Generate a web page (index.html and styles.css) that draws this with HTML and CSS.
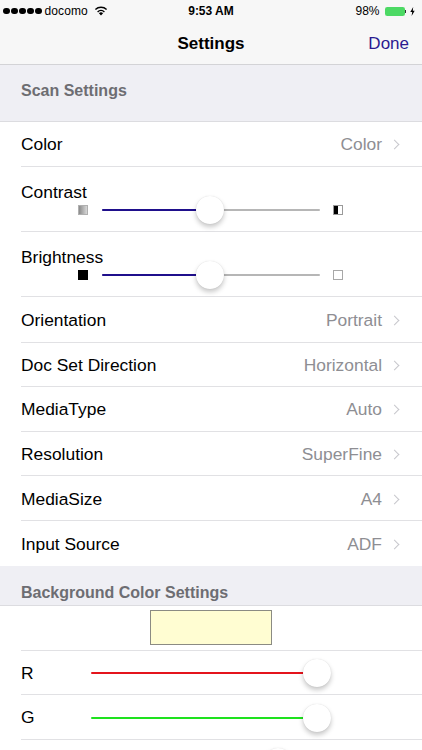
FILE: index.html
```html
<!DOCTYPE html>
<html>
<head>
<meta charset="utf-8">
<link rel="stylesheet" href="styles.css">
</head>
<body>
<div class="screen">
  <div class="status">
    <div class="st-left">
      <span class="dots"><i></i><i></i><i></i><i></i><i></i></span>
      <span class="carrier">docomo</span>
      <svg class="wifi" width="14" height="10" viewBox="0 0 14 10">
        <path d="M7 9.6 L4.9 7.3 A3 3 0 0 1 9.1 7.3 Z" fill="#000"/>
        <path d="M3.6 5.9 A4.9 4.9 0 0 1 10.4 5.9" stroke="#000" stroke-width="1.4" fill="none"/>
        <path d="M1.4 3.6 A8 8 0 0 1 12.6 3.6" stroke="#000" stroke-width="1.4" fill="none"/>
      </svg>
    </div>
    <div class="st-time">9:53 AM</div>
    <div class="st-right">
      <span class="pct">98%</span>
      <span class="battery"><span class="level"></span></span><span class="nub"></span>
      <svg class="bolt" width="5" height="9" viewBox="0 0 5 9"><path d="M3.2 0 L0.3 5 H2.2 L1.6 9 L4.7 3.8 H2.8 Z" fill="#000"/></svg>
    </div>
  </div>
  <div class="nav">
    <div class="nav-title">Settings</div>
    <div class="nav-done">Done</div>
  </div>

  <div class="header header-first">Scan Settings</div>
  <div class="group">
    <div class="row"><span class="label">Color</span><span class="value">Color</span><span class="chev"></span></div>
    <div class="row row-slider">
      <span class="label">Contrast</span>
      <div class="slider-line">
        <span class="ico ico-contrast-low"></span>
        <div class="track"><div class="fill fill-blue" style="width:49.5%"></div><span class="thumb" style="left:49.5%"></span></div>
        <span class="ico ico-contrast-high"></span>
      </div>
    </div>
    <div class="row row-slider">
      <span class="label">Brightness</span>
      <div class="slider-line">
        <span class="ico ico-dark"></span>
        <div class="track"><div class="fill fill-blue" style="width:49.5%"></div><span class="thumb" style="left:49.5%"></span></div>
        <span class="ico ico-light"></span>
      </div>
    </div>
    <div class="row row-tall"><span class="label">Orientation</span><span class="value">Portrait</span><span class="chev"></span></div>
    <div class="row"><span class="label">Doc Set Direction</span><span class="value">Horizontal</span><span class="chev"></span></div>
    <div class="row"><span class="label">MediaType</span><span class="value">Auto</span><span class="chev"></span></div>
    <div class="row"><span class="label">Resolution</span><span class="value">SuperFine</span><span class="chev"></span></div>
    <div class="row"><span class="label">MediaSize</span><span class="value">A4</span><span class="chev"></span></div>
    <div class="row row-last"><span class="label">Input Source</span><span class="value">ADF</span><span class="chev"></span></div>
  </div>

  <div class="header header-second">Background Color Settings</div>
  <div class="group">
    <div class="row row-swatch"><span class="swatch"></span></div>
    <div class="row row-rgb">
      <span class="label rgb-label">R</span>
      <div class="rgb-track"><div class="range"><div class="rgb-fill fill-red" style="width:calc(14px + 100%)"></div><span class="thumb" style="left:100%"></span></div></div>
    </div>
    <div class="row row-rgb row-g">
      <span class="label rgb-label">G</span>
      <div class="rgb-track"><div class="range"><div class="rgb-fill fill-green" style="width:calc(14px + 100%)"></div><span class="thumb" style="left:100%"></span></div></div>
    </div>
    <div class="row row-rgb">
      <span class="label rgb-label">B</span>
      <div class="rgb-track"><div class="range"><div class="rgb-fill fill-bluec" style="width:calc(14px + 81.6%)"></div><span class="thumb" style="left:81.6%"></span></div></div>
    </div>
  </div>
</div>
</body>
</html>
```

FILE: styles.css
```css
* { box-sizing: border-box; }
html, body { margin: 0; padding: 0; }
body {
  width: 422px;
  height: 750px;
  overflow: hidden;
  background: #efeff4;
  font-family: "Liberation Sans", Arial, sans-serif;
  color: #000;
}
.screen { width: 422px; height: 750px; overflow: hidden; }

.status {
  height: 20px;
  background: #f7f7f7;
  display: flex;
  align-items: center;
  justify-content: space-between;
  padding: 2px 7px 0 3px;
  font-size: 12px;
  position: relative;
}
.st-left { display: flex; align-items: center; }
.dots { display: flex; gap: 1.5px; margin-right: 3px; }
.dots i { width: 6.5px; height: 6.5px; border-radius: 50%; background: #000; display: block; }
.carrier { margin-right: 6px; letter-spacing: 0.1px; }
.wifi { display: block; }
.st-time {
  position: absolute;
  left: 0; right: 0;
  top: 2px; bottom: 0;
  display: flex;
  align-items: center;
  justify-content: center;
  font-weight: bold;
  pointer-events: none;
}
.st-right { display: flex; align-items: center; }
.pct { margin-right: 5px; }
.battery {
  width: 20px; height: 9px;
  border: 1px solid #4cd964;
  border-radius: 1.5px;
  display: block;
}
.level { display: block; width: 100%; height: 100%; background: #4cd964; }
.nub { width: 1.5px; height: 3px; background: #333; display: block; margin-right: 4px; }
.bolt { display: block; }

.nav {
  height: 45px;
  background: #f7f7f7;
  border-bottom: 1px solid #d3d3d6;
  display: flex;
  align-items: center;
  justify-content: center;
  position: relative;
  padding-top: 3px;
}
.nav-title { font-size: 17px; font-weight: bold; }
.nav-done {
  position: absolute;
  right: 13px;
  top: 3px; bottom: 0;
  display: flex;
  align-items: center;
  font-size: 17px;
  color: #2b1a90;
}

.header {
  background: #efeff4;
  color: #6d6d72;
  font-size: 16px;
  font-weight: bold;
  padding-left: 21px;
  border-bottom: 1px solid #dcdce0;
  display: flex;
}
.header-first { height: 57px; align-items: center; padding-bottom: 4px; }
.header-second { height: 40px; align-items: flex-end; padding-bottom: 3px; }

.group { background: #fff; padding-left: 21px; }
.row {
  height: 44.6px;
  display: flex;
  align-items: center;
  border-bottom: 1px solid #e1e1e4;
  padding-right: 22px;
  padding-top: 2px;
  font-size: 17.4px;
}
.row-tall { height: 46px; padding-top: 3px; }
.row-last { border-bottom: none; }
.label { flex: 1; }
.value { color: #8e8e93; margin-right: 9px; }
.chev {
  width: 7px; height: 7px;
  border-top: 1.5px solid #c7c7cc;
  border-right: 1.5px solid #c7c7cc;
  transform: rotate(45deg);
  margin-right: 2px;
}

.row-slider {
  height: 65px;
  flex-direction: column;
  align-items: stretch;
  padding-top: 15px;
}
.row-slider .label { flex: none; line-height: 20px; }
.slider-line {
  height: 16px;
  display: flex;
  align-items: center;
  padding-left: 57px;
}
.ico { width: 10px; height: 10px; display: block; flex: none; }
.ico-contrast-low {
  background: linear-gradient(to right, #8a8a8a, #d8d8d8);
  border: 1px solid #b0b0b0;
}
.ico-contrast-high {
  background: linear-gradient(to right, #000 50%, #fff 50%);
  border: 1px solid #9a9a9a;
}
.ico-dark { background: #000; }
.ico-light { background: #fff; border: 1px solid #a8a8a8; }
.track {
  width: 218px;
  height: 2px;
  background: #b6b6b6;
  margin: 0 13px 0 14px;
  position: relative;
  border-radius: 1px;
}
.fill { height: 100%; border-radius: 1px; }
.fill-blue { background: #1f0f8c; }
.thumb {
  position: absolute;
  top: 50%;
  width: 28px; height: 28px;
  margin: -14px 0 0 -14px;
  border-radius: 50%;
  background: #fff;
  box-shadow: 0 3px 5px rgba(0,0,0,0.22), 0 0 1px rgba(0,0,0,0.15);
}

.row-swatch { height: 45px; justify-content: center; padding-right: 21px; padding-top: 0; }
.swatch {
  width: 122px; height: 35px;
  background: #fffdd2;
  border: 1px solid #8b8b83;
}
.row-rgb { height: 44px; padding-right: 0; }
.row-g { height: 45px; }
.rgb-label { flex: none; width: 70px; }
.rgb-track {
  width: 240px;
  height: 2px;
  position: relative;
}
.range {
  position: absolute;
  left: 14px; right: 14px;
  top: 0; bottom: 0;
}
.rgb-fill {
  position: absolute;
  left: -14px; top: 0;
  height: 100%;
  border-radius: 1px;
}
.fill-red { background: #e4141c; }
.fill-green { background: #1ee21e; }
.fill-bluec { background: #1a1aff; }
```
